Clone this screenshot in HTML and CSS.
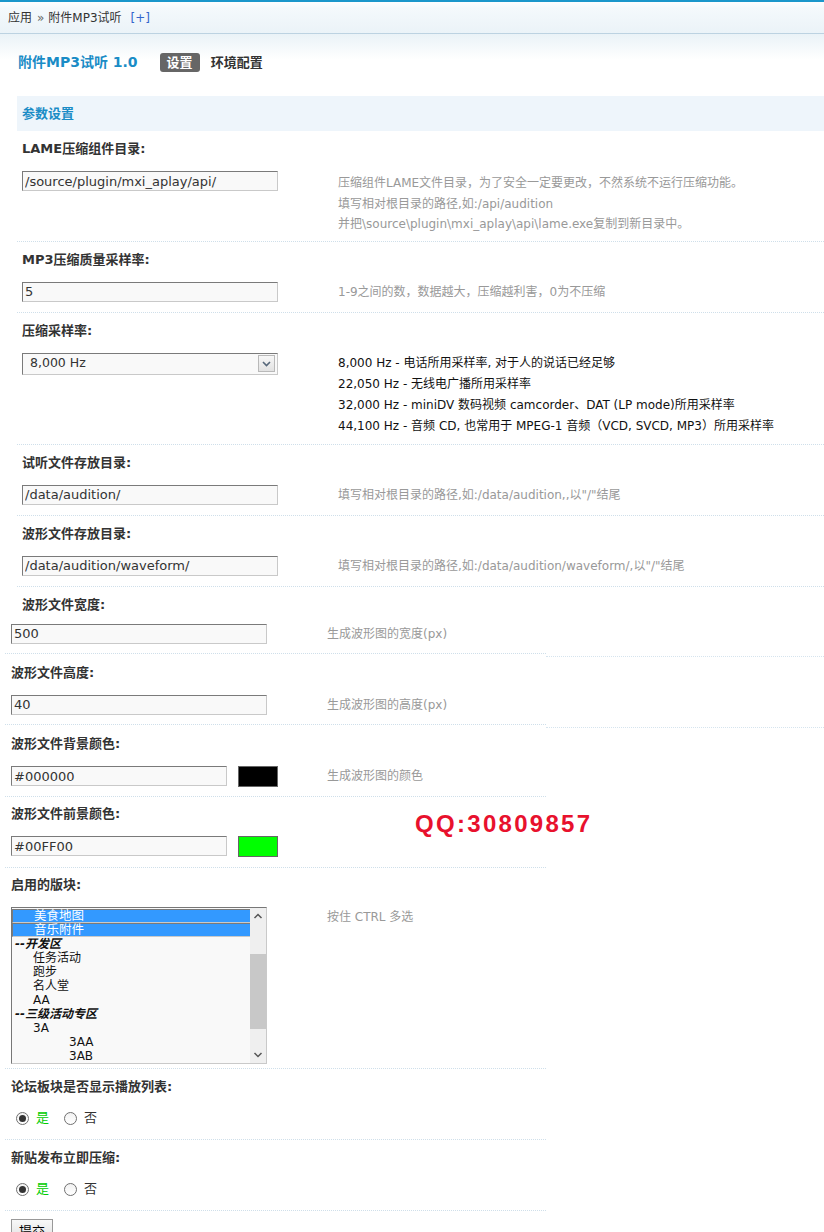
FILE: index.html
```html
<!DOCTYPE html>
<html lang="zh-CN">
<head>
<meta charset="utf-8">
<title>附件MP3试听 - 设置</title>
<link rel="stylesheet" href="styles.css">
</head>
<body>
<div class="page">
  <div class="topline"></div>
  <div class="crumbbar">
    <span>应用</span><span class="arrow">»</span><span>附件MP3试听</span><a class="plus">[+]</a>
  </div>
  <div class="titlebar">
    <h1 class="ptitle">附件MP3试听 1.0</h1>
    <span class="tab on">设置</span>
    <span class="tab">环境配置</span>
  </div>

  <div class="group">
    <div class="band">参数设置</div>

    <div class="row first">
      <div class="lbl">LAME压缩组件目录:</div>
      <div class="field">
        <div><input class="inp" type="text" value="/source/plugin/mxi_aplay/api/"></div>
        <div class="desc multi">压缩组件LAME文件目录，为了安全一定要更改，不然系统不运行压缩功能。<br>填写相对根目录的路径,如:/api/audition<br>并把\source\plugin\mxi_aplay\api\lame.exe复制到新目录中。</div>
      </div>
    </div>

    <div class="row">
      <div class="lbl">MP3压缩质量采样率:</div>
      <div class="field">
        <div><input class="inp" type="text" value="5"></div>
        <div class="desc">1-9之间的数，数据越大，压缩越利害，0为不压缩</div>
      </div>
    </div>

    <div class="row tight">
      <div class="lbl">压缩采样率:</div>
      <div class="field">
        <div>
          <div class="sel"><span class="sel-val">8,000 Hz</span><span class="sel-btn"><svg width="15" height="15" viewBox="0 0 15 15"><path d="M4 6 L7.5 9.5 L11 6" fill="none" stroke="#56677a" stroke-width="1.6"/></svg></span></div>
        </div>
        <div class="desc dark">8,000 Hz - 电话所用采样率, 对于人的说话已经足够<br>22,050 Hz - 无线电广播所用采样率<br>32,000 Hz - miniDV 数码视频 camcorder、DAT (LP mode)所用采样率<br>44,100 Hz - 音频 CD, 也常用于 MPEG-1 音频（VCD, SVCD, MP3）所用采样率</div>
      </div>
    </div>

    <div class="row">
      <div class="lbl">试听文件存放目录:</div>
      <div class="field">
        <div><input class="inp" type="text" value="/data/audition/"></div>
        <div class="desc">填写相对根目录的路径,如:/data/audition,,以"/"结尾</div>
      </div>
    </div>

    <div class="row">
      <div class="lbl">波形文件存放目录:</div>
      <div class="field">
        <div><input class="inp" type="text" value="/data/audition/waveform/"></div>
        <div class="desc">填写相对根目录的路径,如:/data/audition/waveform/,以"/"结尾</div>
      </div>
    </div>
  </div>

  <div class="wide">
    <div class="srow r6">
      <div class="lbl indent">波形文件宽度:</div>
      <div class="field g10">
        <div><input class="inp" type="text" value="500"></div>
        <div class="desc">生成波形图的宽度(px)</div>
      </div>
    </div>
    <div class="tail"></div>
  </div>

  <div class="wide">
    <div class="srow r7">
      <div class="lbl">波形文件高度:</div>
      <div class="field">
        <div><input class="inp" type="text" value="40"></div>
        <div class="desc">生成波形图的高度(px)</div>
      </div>
    </div>
    <div class="tail"></div>
  </div>

  <div class="sub">
    <div class="srow r8">
      <div class="lbl">波形文件背景颜色:</div>
      <div class="field">
        <div class="colorbox"><input class="inp short" type="text" value="#000000"><span class="swatch black"></span></div>
        <div class="desc">生成波形图的颜色</div>
      </div>
    </div>

    <div class="srow">
      <div class="lbl">波形文件前景颜色:</div>
      <div class="field">
        <div class="colorbox"><input class="inp short" type="text" value="#00FF00"><span class="swatch green"></span></div>
        <div class="desc"></div>
      </div>
    </div>

    <div class="srow rlist">
      <div class="lbl">启用的版块:</div>
      <div class="field">
        <div class="listbox">
          <div class="opts">
            <div class="opt sel">美食地图</div>
            <div class="opt sel">音乐附件</div>
            <div class="opt grp">--开发区</div>
            <div class="opt">任务活动</div>
            <div class="opt">跑步</div>
            <div class="opt">名人堂</div>
            <div class="opt">AA</div>
            <div class="opt grp">--三级活动专区</div>
            <div class="opt">3A</div>
            <div class="opt deep">3AA</div>
            <div class="opt deep">3AB</div>
          </div>
          <div class="sb">
            <span class="sb-btn"><svg width="16" height="17" viewBox="0 0 16 17"><path d="M4.5 10 L8 6.5 L11.5 10" fill="none" stroke="#555" stroke-width="1.5"/></svg></span>
            <span class="sb-track"><span class="sb-thumb"></span></span>
            <span class="sb-btn"><svg width="16" height="17" viewBox="0 0 16 17"><path d="M4.5 7 L8 10.5 L11.5 7" fill="none" stroke="#555" stroke-width="1.5"/></svg></span>
          </div>
        </div>
        <div class="desc">按住 CTRL 多选</div>
      </div>
    </div>

    <div class="srow rradio">
      <div class="lbl">论坛板块是否显示播放列表:</div>
      <div class="field">
        <div class="radios">
          <span class="radio checked"></span><span class="yes">是</span>
          <span class="radio"></span><span class="no">否</span>
        </div>
        <div></div>
      </div>
    </div>

    <div class="srow rradio">
      <div class="lbl">新贴发布立即压缩:</div>
      <div class="field">
        <div class="radios">
          <span class="radio checked"></span><span class="yes">是</span>
          <span class="radio"></span><span class="no">否</span>
        </div>
        <div></div>
      </div>
    </div>

    <div class="actions"><button class="btn" type="button">提交</button></div>
  </div>

  <div class="qq">QQ:30809857</div>
</div>
</body>
</html>
```
FILE: styles.css
```css
html {
  overflow: hidden;
}
body {
  margin: 0;
  background: #fff;
  color: #333;
  font-family: "DejaVu Sans", "Noto Sans CJK SC", sans-serif;
  font-size: 12px;
  line-height: 1.5;
}
.page {
  position: relative;
  width: 824px;
}
.topline {
  height: 2px;
  background: #1b97cb;
}
.crumbbar {
  height: 31px;
  display: flex;
  align-items: center;
  padding-left: 8px;
  background: linear-gradient(#fdfeff 0, #f4f9fc 20%, #ebf3f8 100%);
  border-bottom: 1px solid #bcd2e1;
  color: #333;
}
.crumbbar .arrow {
  margin: 0 4px 0 5px;
  color: #666;
}
.crumbbar .plus {
  margin-left: 9px;
  color: #36c;
}
.titlebar {
  box-sizing: border-box;
  height: 62px;
  padding: 0 0 6px 18px;
  display: flex;
  align-items: center;
  background: linear-gradient(#eaf2f7 0, #fff 26px);
}
.ptitle {
  margin: 0;
  font-size: 14px;
  font-weight: bold;
  color: #1a8cc6;
  line-height: 20px;
}
.tab {
  font-size: 13px;
  font-weight: bold;
  color: #333;
  line-height: 19px;
  margin-left: 11px;
}
.tab.on {
  margin-left: 22px;
  height: 19px;
  padding: 0 7px;
  background: #666;
  color: #fff;
  border-radius: 3px;
}
.group {
  margin-left: 17px;
}
.band {
  height: 35px;
  line-height: 35px;
  padding-left: 5px;
  background: #eef5fb;
  color: #1a8cc6;
  font-size: 13px;
  font-weight: bold;
}
.row {
  padding: 9px 0 9px 5px;
  border-bottom: 1px dotted #cfdfea;
}
.row.first {
  padding-bottom: 6px;
}
.row.tight {
  padding-bottom: 7px;
}
.lbl {
  font-size: 13px;
  font-weight: bold;
  line-height: 18px;
  color: #333;
}
.lbl.indent {
  padding-left: 11px;
}
.field {
  display: grid;
  grid-template-columns: 316px 1fr;
  margin-top: 13px;
}
.field.g10 {
  margin-top: 10px;
}
.desc {
  line-height: 21px;
  color: #999;
  white-space: nowrap;
}
.desc.multi {
  line-height: 20.5px;
  padding-top: 2px;
}
.desc.dark {
  color: #111;
}
.inp {
  box-sizing: border-box;
  display: block;
  width: 256px;
  height: 20px;
  margin: 0;
  padding: 0 2px;
  border: 1px solid;
  border-color: #7a7a7a #c9c9c9 #c9c9c9 #7a7a7a;
  background: #f9f9f9;
  color: #333;
  font-family: "DejaVu Sans", "Noto Sans CJK SC", sans-serif;
  font-size: 13px;
  outline: none;
}
.inp.short {
  width: 216px;
}
.sel {
  box-sizing: border-box;
  width: 256px;
  height: 22px;
  display: flex;
  align-items: center;
  justify-content: space-between;
  padding: 0 2px 0 7px;
  border: 1px solid;
  border-color: #7a7a7a #c9c9c9 #c9c9c9 #7a7a7a;
  background: #f9f9f9;
  font-size: 12.5px;
  color: #333;
}
.sel-btn {
  box-sizing: border-box;
  width: 17px;
  height: 17px;
  display: flex;
  align-items: center;
  justify-content: center;
  border: 1px solid #b9b9b9;
  background: linear-gradient(#f7f7f7, #e2e2e2);
}
.sub {
  width: 541px;
  margin-left: 5px;
}
.wide .srow {
  width: 541px;
  margin-left: 5px;
  box-sizing: border-box;
}
.tail {
  margin: 2px 0 0 546px;
  border-top: 1px dotted #d6e4ee;
}
.srow {
  padding: 8px 0 10px 6px;
  border-bottom: 1px dotted #cfdfea;
}
.srow.r6 {
  padding-top: 9px;
  padding-bottom: 8px;
}
.srow.r7 {
  padding-top: 7px;
  padding-bottom: 8px;
}
.srow.r8 {
  padding-top: 7px;
  padding-bottom: 9px;
}
.srow.rlist {
  padding-bottom: 4px;
}
.srow.rradio {
  padding-top: 9px;
}
.srow.rradio .field {
  margin-top: 12px;
}
.colorbox {
  display: flex;
  align-items: center;
}
.swatch {
  box-sizing: border-box;
  width: 40px;
  height: 21px;
  margin-left: 11px;
  border: 1px solid #666;
}
.swatch.black {
  background: #000;
}
.swatch.green {
  background: #00ff00;
}
.listbox {
  box-sizing: border-box;
  width: 256px;
  height: 157px;
  display: flex;
  border: 1px solid;
  border-color: #777 #c9c9c9 #c9c9c9 #777;
  background: #f9f9f9;
}
.opts {
  flex: 1;
  overflow: hidden;
  padding-right: 2px;
  padding-top: 1px;
}
.opt {
  height: 14px;
  line-height: 14px;
  padding-left: 21px;
  color: #111;
  white-space: nowrap;
}
.opt.sel {
  background: #3399ff;
  color: #fff;
}
.opt.grp {
  padding-left: 3px;
  font-weight: bold;
  font-style: italic;
}
.opt.deep {
  padding-left: 57px;
}
.sb {
  width: 16px;
  display: flex;
  flex-direction: column;
  background: #efefef;
}
.sb-btn {
  height: 17px;
  display: block;
}
.sb-btn svg {
  display: block;
}
.sb-track {
  flex: 1;
  display: block;
  padding-top: 29px;
}
.sb-thumb {
  display: block;
  height: 75px;
  background: #c8c8c8;
}
.radios {
  height: 21px;
  display: flex;
  align-items: center;
  padding-left: 5px;
  font-size: 13px;
}
.radio {
  box-sizing: border-box;
  width: 13px;
  height: 13px;
  border: 1px solid #707070;
  border-radius: 50%;
  background: linear-gradient(#f2f2f2, #fff);
  display: flex;
  align-items: center;
  justify-content: center;
}
.radio.checked::after {
  content: "";
  width: 7px;
  height: 7px;
  border-radius: 50%;
  background: #333;
}
.yes {
  margin: 0 15px 0 7px;
  color: #00cc00;
}
.no {
  margin-left: 7px;
  color: #333;
}
.actions {
  padding: 8px 0 0 6px;
}
.btn {
  box-sizing: border-box;
  width: 42px;
  height: 24px;
  margin: 0;
  padding: 0;
  border: 1px solid #999;
  background: linear-gradient(#f8f8f8, #dfdfdf);
  color: #000;
  font-family: "Noto Sans CJK SC", sans-serif;
  font-size: 13px;
}
.qq {
  position: absolute;
  left: 415px;
  top: 812px;
  font-family: "Liberation Sans", Arial, sans-serif;
  font-size: 24px;
  line-height: 24px;
  font-weight: bold;
  letter-spacing: 2.3px;
  color: #e8112d;
}
```
